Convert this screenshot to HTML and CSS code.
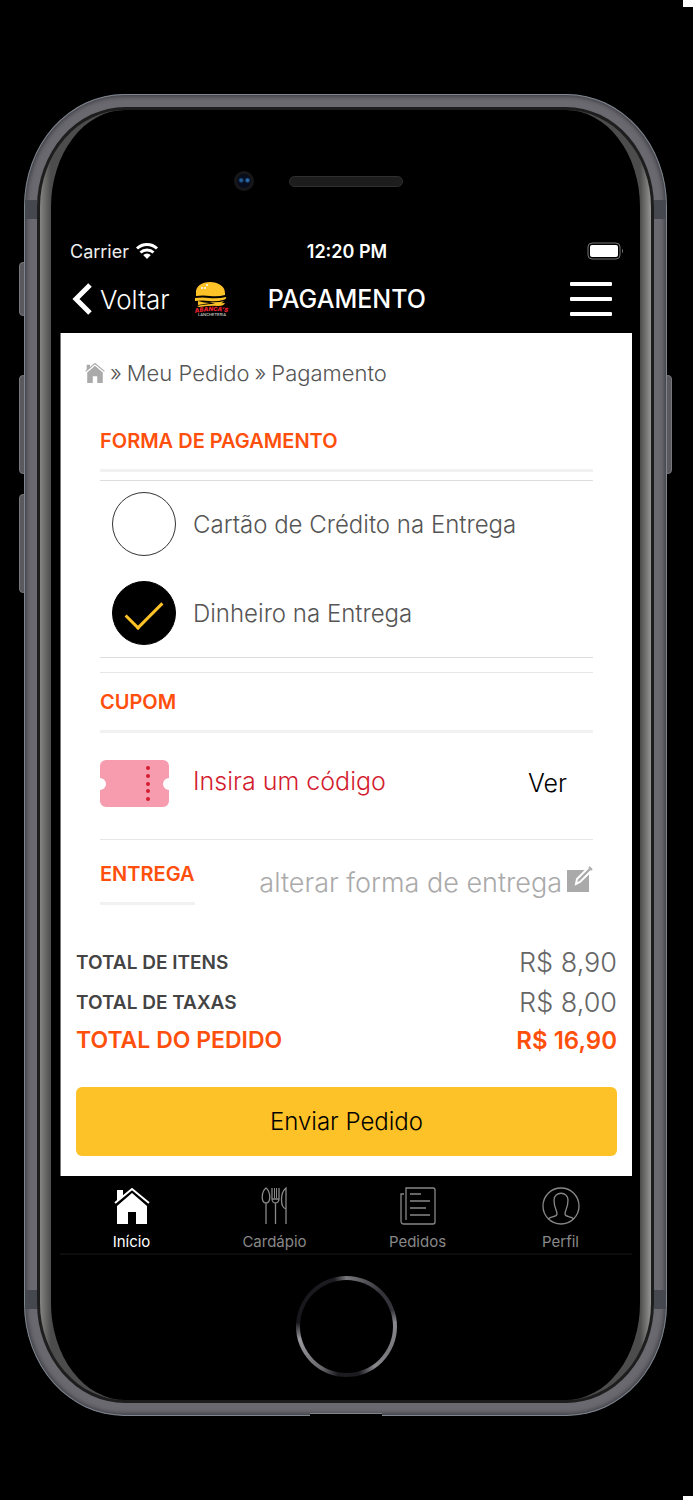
FILE: index.html
```html
<!DOCTYPE html>
<html lang="pt-BR">
<head>
<meta charset="utf-8">
<meta name="viewport" content="width=device-width, initial-scale=1">
<title>Pagamento</title>
<link rel="stylesheet" href="styles.css">
</head>
<body>
<div class="stage">
  <div class="phone">
    <span class="side-button side-button--mute"></span>
    <span class="side-button side-button--up"></span>
    <span class="side-button side-button--down"></span>
    <span class="side-button side-button--power"></span>
    <div class="rail">
      <span class="antenna antenna--top-left"></span>
      <span class="antenna antenna--top-right"></span>
      <span class="antenna antenna--bottom-left"></span>
      <span class="antenna antenna--bottom-right"></span>
      <span class="port"></span>
      <div class="bezel">
        <div class="glass">
          <div class="sensors"><span class="camera"></span><span class="speaker"></span></div>
          <div class="screen">
            <div class="status">
              <span class="carrier">Carrier
                <svg width="24" height="18" viewBox="0 0 24 18" fill="none" stroke="#fff" stroke-width="3"><path d="M2 6.500a14.500 14.500 0 0 1 20 0M5.500 10.500a9.500 9.500 0 0 1 13 0"/><path d="M12 17l-3.800-3.900a5.500 5.500 0 0 1 7.600 0z" fill="#fff" stroke="none"/></svg>
              </span>
              <span class="clock">12:20 PM</span>
              <svg class="battery" width="37" height="18" viewBox="0 0 37 18"><rect x="1" y="1" width="32" height="16" rx="4" fill="none" stroke="#777"/><rect x="3" y="3" width="28" height="12" rx="2" fill="#fff"/><path d="M35 6.500q2 2.500 0 5z" fill="#777"/></svg>
            </div>
            <header class="topbar">
              <button class="back" type="button">
                <svg width="20" height="32" viewBox="0 0 20 32"><path d="M18 2L4 16l14 14" fill="none" stroke="#fff" stroke-width="5"/></svg>
                Voltar
              </button>
              <svg class="logo" width="36" height="36" viewBox="0 0 36 36" role="img" aria-label="Abanca's Lancheteria">
                <path d="M2 13C1 5 8 1 16 1s15 4 15 11v2q-7 2-15 1-7-1-14 0z" fill="#fdc227"/>
                <path d="M1 17q8-1 14 0 9 1 17-1 1 2-3 3-6 2-14 1-7-1-14 0zM4 20q6 2 12 2l-12 2zM15 21q9 1 15-1-2 3-8 3zM3 25q9-2 28-3-1 3-7 3-6-1-19 1z" fill="#fdc227"/>
                <g fill="#fff"><circle cx="8" cy="7" r="1"/><circle cx="13" cy="4" r="1"/><circle cx="11" cy="7" r="1"/></g>
                <path id="arc" d="M1 32Q18 28 36 32" fill="none"/>
                <text class="logo-name"><textPath href="#arc">ABANCA’S</textPath></text>
                <text class="logo-sub" x="18" y="35" text-anchor="middle">LANCHETERIA</text>
              </svg>
              <h1 class="title">PAGAMENTO</h1>
              <button class="menu" type="button" aria-label="Menu"><span></span><span></span><span></span></button>
            </header>
            <main class="page">
              <nav class="crumbs" aria-label="Trilha">
                <a href="#" aria-label="Início"><svg width="20" height="22" viewBox="0 0 36 38" fill="#aaa"><path d="M3 4h6v6l-6 6zM18 6l14 12v19H22V25h-8v12H4V18z"/><path d="M2 17L18 4l16 13" fill="none" stroke="#fff" stroke-width="2"/><path d="M1 16L18 2l17 14" fill="none" stroke="#aaa" stroke-width="2"/></svg></a>
                <span>»</span><a href="#">Meu Pedido</a><span>»</span><span>Pagamento</span>
              </nav>
              <section class="payment">
                <h2 class="heading">FORMA DE PAGAMENTO</h2>
                <div class="options">
                  <label class="option"><input type="radio" name="pay"><span>Cartão de Crédito na Entrega</span></label>
                  <label class="option"><input type="radio" name="pay" checked><span>Dinheiro na Entrega</span></label>
                </div>
              </section>
              <section class="coupon">
                <h2 class="heading">CUPOM</h2>
                <div class="coupon-row">
                  <svg width="69" height="47" viewBox="0 0 69 47"><path d="M6 0h57a6 6 0 0 1 6 6v12a6 6 0 0 0 0 12v11a6 6 0 0 1-6 6H6a6 6 0 0 1-6-6V30a6 6 0 0 0 0-12V6a6 6 0 0 1 6-6z" fill="#f69cae"/><g fill="#d31c2f"><circle cx="48" cy="8" r="2"/><circle cx="48" cy="16" r="2"/><circle cx="48" cy="24" r="2"/><circle cx="48" cy="31" r="2"/><circle cx="48" cy="39" r="2"/></g></svg>
                  <span class="code">Insira um código</span>
                  <button class="see" type="button">Ver</button>
                </div>
              </section>
              <section class="delivery">
                <h2 class="heading">ENTREGA</h2>
                <a class="change" href="#">alterar forma de entrega
                  <svg width="26" height="32" viewBox="0 0 26 32"><path d="M0 4h22v22H0z" fill="#aaa"/><path d="M9 18l1-5L22 1l3 3-12 12z" fill="#aaa" stroke="#fff" stroke-width="2"/><path d="M22 1l3 3" stroke="#aaa" stroke-width="2"/></svg>
                </a>
              </section>
              <dl class="totals">
                <div class="line"><dt>TOTAL DE ITENS</dt><dd>R$ 8,90</dd></div>
                <div class="line"><dt>TOTAL DE TAXAS</dt><dd>R$ 8,00</dd></div>
                <div class="line line--sum"><dt>TOTAL DO PEDIDO</dt><dd>R$ 16,90</dd></div>
              </dl>
              <button class="submit" type="button">Enviar Pedido</button>
            </main>
            <nav class="tabs" aria-label="Principal">
              <a class="tab tab--on" href="#"><svg width="36" height="38" viewBox="0 0 36 38" fill="currentColor"><path d="M3 3h6v6l-6 6zM18 6l15 13v18H22V25h-8v12H3V19z"/><path d="M2 17L18 4l16 13" fill="none" stroke="#000" stroke-width="2"/><path d="M1 16L18 2l17 14" fill="none" stroke="currentColor" stroke-width="2"/></svg>Início</a>
              <a class="tab" href="#"><svg width="36" height="38" viewBox="0 0 36 38" fill="none" stroke="currentColor"><path d="M9 1c-5 4-5 15 0 15s5-11 0-15zM9 16v21M18.500 16v21M15 1v11a3.500 4 0 0 0 7 0V1M15 12h7M29 37V1c-6 5-6 19 0 21" stroke-width="1.300"/><path d="M17.500 1v10M19.500 1v10" stroke-width="1"/></svg>Cardápio</a>
              <a class="tab" href="#"><svg width="36" height="38" viewBox="0 0 36 38" fill="none" stroke="currentColor" stroke-width="1.300"><path d="M6 33V1h27a2 2 0 0 1 2 2v32a2 2 0 0 1-2 2H4q-3 0-3-3V7h3M10 7h11M10 14h20M10 21h16M10 28h20"/></svg>Pedidos</a>
              <a class="tab" href="#"><svg width="38" height="38" viewBox="0 0 38 38" fill="none" stroke="currentColor" stroke-width="1.300"><circle cx="19" cy="19" r="18"/><path d="M6 32c4-3 9-2 9-5 0-4-3-6-3-14 0-9 14-9 14 0 0 8-3 10-3 14 0 3 5 2 9 5"/></svg>Perfil</a>
            </nav>
          </div>
          <div class="home"></div>
        </div>
      </div>
    </div>
  </div>
</div>
</body>
</html>
```
FILE: styles.css
```css
*, *::after { box-sizing: border-box; }
body { margin: 0; background: #000; font-family: Inter, "Noto Sans", sans-serif; color: #555; }
h1, h2, dl, dd { margin: 0; }
a { color: inherit; text-decoration: none; }
button { border: 0; padding: 0; background: none; font: inherit; color: inherit; cursor: pointer; }
svg { display: block; flex: none; }

.stage {
  min-height: 100vh;
  padding: 94px 26px 80px 24px;
  background:
    linear-gradient(#fff, #fff) top right / 10px 7px no-repeat,
    linear-gradient(#fff, #fff) bottom right / 10px 4px no-repeat,
    #000;
}
.phone { position: relative; }
.rail {
  position: relative;
  border-radius: 100px / 112px;
  border: 1px solid #7d858f;
  padding: 12px;
  background: #6b6970;
  box-shadow: inset 0 0 5px 1px #34343a;
}
.bezel { border-radius: 88px / 100px; padding: 3px; background: #1d1d1d; }
.glass {
  border-radius: 85px / 97px;
  border: solid transparent;
  border-width: 0 11px;
  padding: 60px 8px 23px 9px;
  background:
    linear-gradient(#000, #000) padding-box,
    linear-gradient(90deg, #858583, #4c4c4c 11px, #4c4c4c calc(100% - 11px), #959593) border-box;
}
.antenna { position: absolute; width: 12px; height: 19px; background: #45484e; }
.antenna--top-left { top: 105px; left: 0; }
.antenna--top-right { top: 105px; right: 0; }
.antenna--bottom-left { bottom: 106px; left: 0; }
.antenna--bottom-right { bottom: 106px; right: 0; }
.port { position: absolute; bottom: -1px; left: 50%; width: 72px; height: 3px; margin-left: -36px; border-top: 1px solid #7d858f; background: #000; }
.side-button { position: absolute; left: -5px; width: 8px; height: 99px; border: 1px solid #77777d; border-radius: 4px; background: #59595e; }
.side-button--mute { top: 168px; height: 54px; }
.side-button--up { top: 281px; }
.side-button--down { top: 400px; }
.side-button--power { top: 281px; left: auto; right: -5px; }

.sensors { display: grid; grid-template-columns: 1fr 114px 1fr; align-items: center; height: 22px; }
.camera { justify-self: end; width: 20px; height: 20px; margin-right: 35px; border: 3px solid #17171a; border-radius: 50%; background: radial-gradient(circle at 30% 45%, #245f9a 0 1px, transparent 3px), radial-gradient(circle at 75% 45%, #2c6db0 0 1px, transparent 3px), #070d1c; }
.speaker { height: 11px; border: 1px solid #303030; border-radius: 6px; background: #1d1d1d; }

.screen { margin-top: 46px; }
.status { display: grid; grid-template-columns: 1fr auto 1fr; align-items: center; height: 26px; padding: 0 8px 0 10px; color: #fff; font-size: 18px; }
.carrier { display: flex; align-items: center; gap: 6px; color: #eee; }
.clock { font-weight: 600; }
.battery { justify-self: end; }
.topbar { display: flex; align-items: center; height: 69px; padding: 1px 20px 0 12px; color: #fff; }
.back { display: flex; align-items: center; gap: 8px; font-size: 26px; font-weight: 300; }
.logo { margin-left: 24px; }
.logo-name { font: italic 900 6px Inter, sans-serif; fill: #e3202f; }
.logo-sub { font: 500 4px Inter, sans-serif; fill: #ccc; }
.title { margin-left: 38px; font-size: 25px; font-weight: 500; }
.menu { display: grid; gap: 11px; width: 42px; margin-left: auto; }
.menu span { height: 4px; background: #fff; border-radius: 1px; }

.page { padding: 24px 15px 20px; background: #fff; border-left: 1px solid #777; }
.crumbs { display: flex; align-items: center; gap: 5px; height: 32px; padding-left: 9px; font-size: 22px; font-weight: 300; }
.payment, .coupon, .delivery { margin: 0 24px; }
.heading { color: #ff4f0c; font-size: 20px; font-weight: 600; line-height: 28px; border-bottom: 3px solid #f1f1f1; padding-bottom: 14px; }
.payment { padding-top: 38px; }
.options { display: grid; gap: 25px; margin-top: 8px; padding: 11px 12px 12px; border: solid #ddd; border-width: 1px 0; }
.option { display: flex; align-items: center; gap: 17px; font-size: 24px; font-weight: 300; }
.option input { appearance: none; flex: none; width: 64px; height: 64px; margin: 0; border: 1px solid #333; border-radius: 50%; display: grid; place-items: center; }
.option input:checked { background: #000; border-color: #000; }
.option input:checked::after { content: ""; width: 36px; height: 19px; margin-bottom: 6px; border: solid #fdc227; border-width: 0 0 3px 3px; transform: rotate(-45deg); }
.coupon { margin-top: 14px; padding-top: 15px; border-top: 1px solid #e6e6e6; }
.coupon-row { display: flex; align-items: center; gap: 24px; height: 107px; padding: 0 26px 6px 0; border-bottom: 1px solid #e6e6e6; font-size: 25px; font-weight: 300; }
.code { padding-bottom: 4px; color: #d31c2f; }
.see { margin-left: auto; color: #000; }
.delivery { display: flex; align-items: start; justify-content: space-between; padding-top: 20px; }
.change { display: flex; align-items: center; gap: 5px; height: 44px; color: #aaa; font-size: 27px; font-weight: 300; }
.totals { margin-top: 37px; color: #444; }
.line { display: flex; align-items: center; justify-content: space-between; height: 40px; }
.line dt { font-size: 19px; font-weight: 600; }
.line dd { font-size: 27px; font-weight: 300; color: #666; }
.line--sum { height: 36px; color: #ff4f0c; }
.line--sum dt { font-size: 23px; }
.line--sum dd { font-size: 24px; font-weight: 600; color: inherit; }
.submit { display: block; width: 100%; height: 69px; margin-top: 29px; border-radius: 6px; background: #fdc227; color: #000; font-size: 24px; font-weight: 300; }

.tabs { display: grid; grid-template-columns: repeat(4, 1fr); height: 79px; padding-top: 11px; border-bottom: 2px solid #0d0d0d; color: #888; font-size: 15px; }
.tab { display: flex; flex-direction: column; align-items: center; gap: 7px; }
.tab--on { color: #fff; }
.home {
  width: 101px;
  aspect-ratio: 1;
  margin: 21px auto 0;
  border: 4px solid transparent;
  border-radius: 50%;
  background:
    linear-gradient(#000, #000) padding-box,
    conic-gradient(#77777c, #333339 45deg, #33333a 70deg, #88888d 85deg, #77777c 120deg, #88888d 145deg, #1b1b20 165deg, #1b1b20 190deg, #66666b 210deg, #99999e 255deg, #16161b 275deg, #1b1b20 345deg, #77777c) border-box;
}
```
